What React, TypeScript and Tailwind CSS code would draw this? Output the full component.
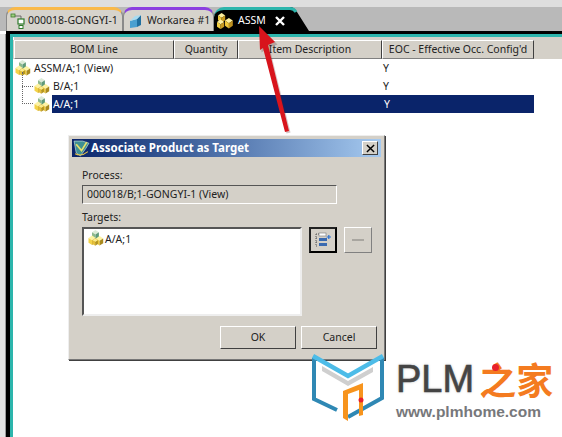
const font = "font-['Noto_Sans',sans-serif]";

function Cube({ x, y, s, top, left, right }: { x: number; y: number; s: number; top: string; left: string; right: string }) {
  return (
    <g transform={`translate(${x} ${y}) scale(${s})`}>
      <path d="M0 2 L3 0 L6 2 L3 4 Z" fill={top} />
      <path d="M0 2 L3 4 L3 8 L0 6 Z" fill={left} />
      <path d="M6 2 L3 4 L3 8 L6 6 Z" fill={right} />
    </g>
  );
}

function AssemblyIcon({ className = "" }: { className?: string }) {
  return (
    <svg viewBox="0 0 16 16" width="16" height="16" className={className}>
      <Cube x={4} y={0} s={1.15} top="#dcebd8" left="#8db98d" right="#5f9a78" />
      <Cube x={0.5} y={5.5} s={1.2} top="#fdf3a4" left="#f3d348" right="#c9a428" />
      <Cube x={8} y={6} s={1.2} top="#fdf3a4" left="#ecc83c" right="#a98a1e" />
      <Cube x={4.5} y={8.5} s={0.9} top="#fbeb8c" left="#e6c038" right="#b3941f" />
    </svg>
  );
}

function YellowIcon({ className = "" }: { className?: string }) {
  return (
    <svg viewBox="0 0 16 16" width="16" height="16" className={className}>
      <Cube x={1} y={0} s={1.2} top="#fdf0a0" left="#f0c83a" right="#c89a20" />
      <Cube x={0} y={6.5} s={1.2} top="#fdf0a0" left="#f3cf42" right="#c79a22" />
      <Cube x={8} y={5} s={1.3} top="#fdf0a0" left="#f0c83a" right="#bd9120" />
    </svg>
  );
}

function Tab({ accent, icon, label, width }: { accent: string; icon: React.ReactNode; label: string; width: string }) {
  return (
    <div className={`${width} h-full rounded-t-[9px] border-t-[3px] ${accent} bg-[#d6d3cc] border-x border-x-[#8a8a8a] flex items-center`}>
      {icon}
      <span className="text-[10.5px] text-[#222] whitespace-nowrap">{label}</span>
    </div>
  );
}

function HeaderCell({ label, width }: { label: string; width: string }) {
  return (
    <div className={`${width} h-full pt-px bg-[#d4d0c8] border border-t-white border-l-white border-r-[#404040] border-b-[#808080] flex items-center justify-center text-[10.5px] text-[#222]`}>
      {label}
    </div>
  );
}

function Raised({ className = "", children }: { className?: string; children?: React.ReactNode }) {
  return (
    <div className={`bg-[#d4d0c8] border border-t-white border-l-white border-r-[#404040] border-b-[#404040] flex items-center justify-center text-[10.5px] text-[#222] ${className}`}>
      {children}
    </div>
  );
}

function Dialog() {
  return (
    <div className="absolute left-[68px] top-[135px] w-[317px] h-[225px] bg-[#d4d0c8] border border-[#777] border-t-[#eee] border-l-[#eee] shadow-[1px_1px_0_#404040] p-[3px] flex flex-col">
      <div className="h-[18px] bg-gradient-to-r from-[#0a246a] to-[#a6caf0] flex items-center pl-[1px] pr-[3px]">
        <svg viewBox="0 0 16 16" width="17" height="17">
          <path d="M1 1 L9 1 L15 3 L12 8 L7 15 L3 12 Z" fill="#3f8f93" stroke="#cfe4e6" strokeWidth="0.6" />
          <path d="M3 4 L8 10 L13 2" fill="none" stroke="#e8e06a" strokeWidth="1.6" />
          <path d="M2 13 Q8 16 14 11" fill="none" stroke="#e8c84a" strokeWidth="1" />
        </svg>
        <span className="ml-[1px] text-[11.5px] font-bold text-white whitespace-nowrap">Associate Product as Target</span>
        <Raised className="ml-auto w-[16px] h-[14px]">
          <svg viewBox="0 0 10 10" width="9" height="9">
            <path d="M1 1 L9 9 M9 1 L1 9" stroke="#000" strokeWidth="1.6" />
          </svg>
        </Raised>
      </div>

      <div className="pl-[10px] pt-[9px] flex flex-col text-[10.5px] text-[#222]">
        <div className="h-[16px] leading-[18px]">Process:</div>
        <div className="mt-[3px] w-[255px] h-[19px] border border-t-[#555] border-l-[#555] border-r-white border-b-white flex items-center pl-[4px] pt-px whitespace-nowrap">
          000018/B;1-GONGYI-1 (View)
        </div>
        <div className="mt-[4px] h-[16px] leading-[18px]">Targets:</div>
        <div className="mt-[3px] flex items-start">
          <div className="w-[220px] h-[89px] bg-white border-2 border-t-[#555] border-l-[#555] border-r-[#eee] border-b-[#eee] flex items-start pl-[4px] pt-[1px]">
            <AssemblyIcon />
            <span className="ml-[1px] leading-[18px]">A/A;1</span>
          </div>
          <div className="ml-[7px] w-[28px] h-[26px] bg-[#d4d0c8] border-2 border-t-[#222] border-l-[#222] border-r-black border-b-black flex items-center justify-center">
            <svg viewBox="0 0 18 16" width="18" height="16">
              <path d="M2 2 H8 M2 2 V14 M2 6 H4 M2 10 H4 M2 14 H4" stroke="#555" strokeWidth="1" strokeDasharray="1 1" fill="none" />
              <rect x="5" y="1" width="7" height="3" fill="#fff" stroke="#777" strokeWidth="0.6" />
              <rect x="5" y="6" width="8" height="3" fill="#3a6ab0" />
              <rect x="5" y="11" width="8" height="3" fill="#3a6ab0" />
              <path d="M12.5 5 H17 M14.8 3 V7" stroke="#2a6fd0" strokeWidth="1.2" />
            </svg>
          </div>
          <Raised className="ml-[7px] w-[28px] h-[26px] !border-r-[#808080] !border-b-[#808080]">
            <div className="w-[12px] h-[2px] bg-[#a9a6a0]" />
          </Raised>
        </div>
      </div>

      <div className="mt-[10px] mr-[4px] flex justify-end gap-[5px]">
        <Raised className="w-[76px] h-[23px] pt-px">OK</Raised>
        <Raised className="w-[76px] h-[23px] pt-px">Cancel</Raised>
      </div>
    </div>
  );
}

function Arrow() {
  return (
    <svg className="absolute left-[250px] top-[20px]" width="50" height="120" viewBox="250 20 50 120">
      <path d="M259 26 L276 43 L268 46 L289 131 L285 132 L263 49 L260 51 Z" fill="#5a2020" opacity="0.25" transform="translate(1.5 1.5)" />
      <path d="M259 26 L275 42 L268 45 L289 131 L285 132 L263 48 L260 50 Z" fill="#d8141c" />
    </svg>
  );
}

function Logo() {
  return (
    <>
      <svg className="absolute left-[308px] top-[350px]" width="80" height="74" viewBox="308 350 80 74">
        <path d="M322 366 L348 381 L373 367 L373 372 L348 386 L322 371 Z" fill="#cfcfcf" />
        <path d="M314 358 L314 399 L337 410" fill="none" stroke="#2f88b4" strokeWidth="4" />
        <path d="M382 358 L382 398 L348 417" fill="none" stroke="#2f88b4" strokeWidth="4" />
        <path d="M313 356 L348 376 L383 356" fill="none" stroke="#4dbce8" strokeWidth="4.5" />
        <path d="M343 391 L363 383 L363 415 L359 416 L359 390 L348 394 L348 421 L343 418 Z" fill="#f7941d" />
        <circle cx="361" cy="400" r="2.5" fill="#e8202a" />
      </svg>
      <div className="absolute left-[396px] top-[358px] flex flex-col">
        <div className="flex items-center">
          <span className="font-['Liberation_Sans',sans-serif] text-[38px] leading-[42px] text-[#444] [-webkit-text-stroke:0.6px_#444] [text-shadow:0_0_3px_#bbb]">PLM</span>
          <span className="ml-[5px] font-['Noto_Sans_CJK_SC',sans-serif] font-bold text-[37px] leading-[42px] text-[#f47b20] whitespace-nowrap">之家</span>
        </div>
        <span className="mt-[3px] font-['Liberation_Sans',sans-serif] font-bold text-[15.5px] leading-[18px] text-[#77787b] whitespace-nowrap">www.plmhome.com</span>
      </div>
      <div className="absolute left-[492px] top-[364px] w-[7px] h-[7px] rounded-full bg-[#e8202a]" />
    </>
  );
}

export default function App() {
  return (
    <div className={`relative w-[562px] h-[437px] overflow-hidden bg-white ${font}`}>
      <div className="h-[7px] bg-[#dedede]" />
      <div className="h-[24px] bg-[#b9b9b9] flex items-stretch pl-[6px]">
        <Tab
          width="w-[117px]"
          accent="border-t-[#f9b94a]"
          label="000018-GONGYI-1"
          icon={
            <svg viewBox="0 0 16 16" width="16" height="16" className="ml-[3px] mr-[2px]">
              <path d="M3 3 H11 V8" fill="none" stroke="#555" strokeWidth="0.8" />
              <rect x="1" y="1" width="4" height="3" fill="#9fd07f" stroke="#3d7a2c" strokeWidth="0.8" />
              <rect x="8" y="6" width="6" height="5" fill="#fff" stroke="#2f7a2a" strokeWidth="1.2" />
              <rect x="9" y="12.5" width="4" height="3" fill="#fff" stroke="#2f7a2a" strokeWidth="1" />
            </svg>
          }
        />
        <Tab
          width="w-[91px]"
          accent="border-t-[#8b3fe0]"
          label="Workarea #1"
          icon={
            <svg viewBox="0 0 16 16" width="16" height="16" className="ml-[4px] mr-[3px]">
              <path d="M2 8 L9 6 L9 14 L2 15 Z" fill="#4aa0d0" />
              <path d="M9 6 L13 2 L13 12 L9 14 Z" fill="#1f6f9f" />
              <path d="M2 8 L7 3 L13 2 L9 6 Z" fill="#a8dcf0" />
            </svg>
          }
        />
        <div className="w-[76px] h-full bg-black rounded-tl-[10px] border-t-[3px] border-t-[#2cb5ac] flex items-center text-white">
          <YellowIcon className="ml-[3px] mr-[5px]" />
          <span className="text-[10.5px] whitespace-nowrap">ASSM</span>
          <svg viewBox="0 0 10 10" width="10" height="10" className="ml-[9px]">
            <path d="M1 1 L9 9 M9 1 L1 9" stroke="#fff" strokeWidth="2.4" />
          </svg>
        </div>
        <svg width="19" height="24" viewBox="0 0 19 24">
          <path d="M0 0 Q4 0 7 5 L19 24 L0 24 Z" fill="#000" />
          <path d="M0 1.5 Q4 1.5 6 5" fill="none" stroke="#2cb5ac" strokeWidth="3" />
        </svg>
      </div>
      <div className="h-[3px] bg-black ml-[6px]" />

      <div className="h-[403px] flex">
        <div className="w-[6px] bg-[#e4e4e4] border-r border-r-[#9a9a9a]" />
        <div className="w-[4px] bg-black" />
        <div className="flex-1 border-l-[3px] border-t-[3px] border-[#2cb5ac] bg-white">
          <div className="h-[3px] bg-[#d4d0c8] ml-px" />
          <div className="h-[19px] flex items-center bg-[#d4d0c8] pl-px">
            <HeaderCell width="w-[160px]" label="BOM Line" />
            <HeaderCell width="w-[64px]" label="Quantity" />
            <HeaderCell width="w-[144px]" label="Item Description" />
            <HeaderCell width="w-[152px]" label="EOC - Effective Occ. Config'd" />
          </div>
          <div className="relative text-[10.5px] text-[#222]">
            <div className="h-[18px] flex items-center pl-[2px]">
              <AssemblyIcon />
              <span className="ml-[3px] pt-px w-[349px] whitespace-nowrap">ASSM/A;1 (View)</span>
              <span className="pt-px">Y</span>
            </div>
            <div className="h-[18px] flex items-center pl-[21px]">
              <AssemblyIcon />
              <span className="ml-[3px] pt-px w-[330px] whitespace-nowrap">B/A;1</span>
              <span className="pt-px">Y</span>
            </div>
            <div className="h-[18px] flex items-center pl-[21px]">
              <AssemblyIcon />
              <div className="ml-[2px] w-[482px] h-full pt-px bg-[#0a246a] text-white flex items-center">
                <span className="w-[332px] pl-[1px]">A/A;1</span>
                <span>Y</span>
              </div>
            </div>
            <div className="absolute left-[9px] top-[13px] w-[11px] h-[32px] border-l border-b border-dotted border-[#666]" />
            <div className="absolute left-[9px] top-[27px] w-[11px] border-t border-dotted border-[#666]" />
          </div>
        </div>
      </div>

      <Dialog />
      <Logo />
      <Arrow />
    </div>
  );
}
